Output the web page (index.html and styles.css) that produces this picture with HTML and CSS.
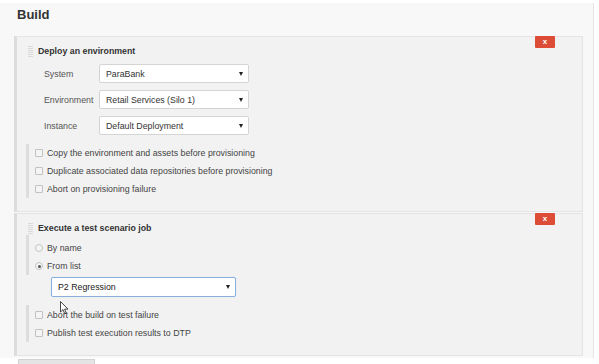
FILE: index.html
```html
<!DOCTYPE html>
<html lang="en">
<head>
    <meta charset="UTF-8">
    <title>Build</title>
    <link rel="stylesheet" href="styles.css">
</head>
<body>
    <div class="page">
        <h1 class="page-title">Build</h1>

        <div class="step">
            <div class="step-head">
                <div class="step-title">
                    <span class="grip"></span>
                    Deploy an environment
                </div>
                <button class="remove">x</button>
            </div>
            <div class="fields">
                <div class="label">System</div>
                <div class="select"><span>ParaBank</span><i class="caret"></i></div>
                <div class="label">Environment</div>
                <div class="select"><span>Retail Services (Silo 1)</span><i class="caret"></i></div>
                <div class="label">Instance</div>
                <div class="select"><span>Default Deployment</span><i class="caret"></i></div>
            </div>
            <div class="group">
                <label class="option"><span class="check"></span>Copy the environment and assets before provisioning</label>
                <label class="option"><span class="check"></span>Duplicate associated data repositories before provisioning</label>
                <label class="option"><span class="check"></span>Abort on provisioning failure</label>
            </div>
        </div>

        <div class="step">
            <div class="step-head">
                <div class="step-title">
                    <span class="grip"></span>
                    Execute a test scenario job
                </div>
                <button class="remove">x</button>
            </div>
            <div class="group radios">
                <label class="option"><span class="radio"></span>By name</label>
                <label class="option"><span class="radio checked"></span>From list</label>
            </div>
            <div class="select wide focused"><span>P2 Regression</span><i class="caret"></i></div>
            <div class="group last">
                <label class="option"><span class="check"></span>Abort the build on test failure</label>
                <label class="option"><span class="check"></span>Publish test execution results to DTP</label>
            </div>
            <svg class="cursor" width="9" height="14" viewBox="0 0 9 14">
                <path d="M0.5 0.5 L0.5 11 L3 8.6 L4.8 12.8 L6.3 12.1 L4.6 8.1 L8 8.1 Z" fill="#fff" stroke="#333" stroke-width="0.9"/>
            </svg>
        </div>
    </div>
    <div class="add-step"></div>
</body>
</html>
```

FILE: styles.css
```css
body {
    margin: 0;
    background-color: #fff;
    font-family: "Liberation Sans", Arial, sans-serif;
    font-size: 8.8px;
    color: #333;
    overflow: hidden;
}
.page {
    width: 569px;
    margin-top: 3px;
    padding: 4px 10px 1px 14px;
    background-color: #f8f8f8;
    border-right: 1px solid #e4e4e4;
}
.page-title {
    margin: 0 0 14px 3px;
    font-size: 13px;
    line-height: 15px;
    font-weight: bold;
    color: #333;
}
.step {
    position: relative;
    background-color: #f2f2f2;
    border: 1px solid #e4e4e4;
    border-left: 3px solid #dcdcdc;
    padding: 0 27px 13px 11px;
    margin-bottom: 1px;
}
.step-head {
    display: flex;
    justify-content: space-between;
    align-items: flex-start;
    height: 20px;
}
.step-title {
    display: flex;
    align-items: center;
    gap: 5px;
    margin-top: 9px;
    line-height: 11px;
    font-weight: bold;
    color: #333;
}
.grip {
    width: 5px;
    height: 11px;
    background: repeating-linear-gradient(#dadada 0 1px, transparent 1px 2px);
}
.remove {
    width: 20px;
    height: 12px;
    margin-top: -1px;
    padding: 0;
    border: none;
    border-radius: 1px;
    background-color: #dd4c37;
    color: #fff;
    font-family: "Liberation Sans", Arial, sans-serif;
    font-size: 8px;
    font-weight: bold;
    line-height: 12px;
}
.fields {
    display: grid;
    grid-template-columns: 55px 150px;
    row-gap: 7px;
    align-items: center;
    margin: 7px 0 0 16px;
}
.label {
    color: #555;
}
.select {
    display: flex;
    justify-content: space-between;
    align-items: center;
    box-sizing: border-box;
    height: 19px;
    padding: 0 5px 0 6px;
    background-color: #fff;
    border: 1px solid #d4d4d4;
    border-radius: 2px;
    color: #333;
}
.caret {
    width: 0;
    height: 0;
    border-left: 2.5px solid transparent;
    border-right: 2.5px solid transparent;
    border-top: 4px solid #222;
}
.group {
    margin: 9px 0 0 -2px;
    padding: 0 0 0 6px;
    border-left: 3px solid #dddddd;
}
.option {
    display: flex;
    align-items: center;
    gap: 4px;
    height: 18px;
    color: #444;
}
.check {
    box-sizing: border-box;
    width: 8px;
    height: 8px;
    border: 1px solid #c2c2c2;
    border-radius: 1px;
    background-color: #f4f4f4;
}
.radio {
    box-sizing: border-box;
    width: 8px;
    height: 8px;
    border: 1px solid #c4c4c4;
    border-radius: 50%;
    background-color: #f4f4f4;
    display: flex;
    align-items: center;
    justify-content: center;
}
.radio.checked::after {
    content: "";
    width: 3px;
    height: 3px;
    border-radius: 50%;
    background-color: #555;
}
.radios {
    margin-top: 1px;
    padding-top: 4px;
}
.select.wide {
    width: 185px;
    height: 20px;
    margin: 2px 0 0 23px;
}
.select.focused {
    border-color: #8aafdc;
    box-shadow: 0 0 1px #b7cfee;
    color: #222;
}
.group.last {
    margin-top: 8px;
    padding-top: 1px;
}
.cursor {
    position: absolute;
    left: 43px;
    top: 87px;
}
.add-step {
    width: 75px;
    height: 10px;
    margin: 1px 0 0 18px;
    background-color: #e4e4e4;
    border: 1px solid #d2d2d2;
}
```
